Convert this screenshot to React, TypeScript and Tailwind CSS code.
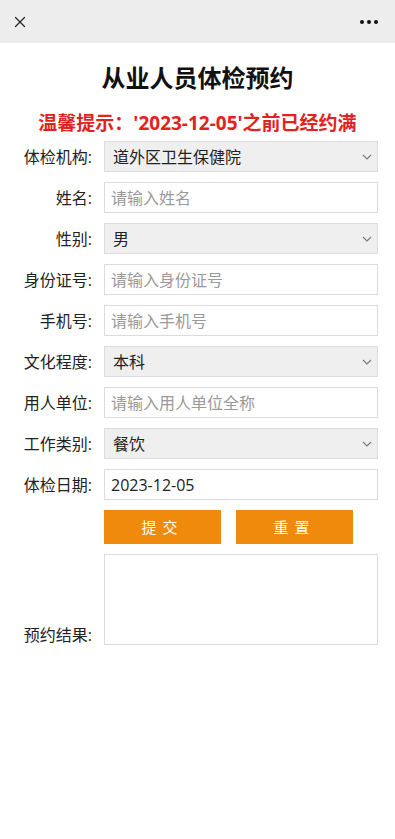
import { X } from 'lucide-react'

type Field =
  | { kind: 'select'; label: string; value: string }
  | { kind: 'input'; label: string; placeholder?: string; value?: string }

const fields: Field[] = [
  { kind: 'select', label: '体检机构', value: '道外区卫生保健院' },
  { kind: 'input', label: '姓名', placeholder: '请输入姓名' },
  { kind: 'select', label: '性别', value: '男' },
  { kind: 'input', label: '身份证号', placeholder: '请输入身份证号' },
  { kind: 'input', label: '手机号', placeholder: '请输入手机号' },
  { kind: 'select', label: '文化程度', value: '本科' },
  { kind: 'input', label: '用人单位', placeholder: '请输入用人单位全称' },
  { kind: 'select', label: '工作类别', value: '餐饮' },
  { kind: 'input', label: '体检日期', value: '2023-12-05' },
]

const Chevron = () => (
  <svg width="10" height="6" viewBox="0 0 10 6" className="shrink-0">
    <path d="M1 1l4 4 4-4" fill="none" stroke="#777" strokeWidth="1.1" />
  </svg>
)

const Label = ({ text }: { text: string }) => (
  <div className="w-[94px] shrink-0 pr-[2px] text-right text-[16px] text-[#222]">
    {text}:
  </div>
)

const App = () => {
  return (
    <div
      className="min-h-[839px] bg-white"
      style={{ fontFamily: '"Open Sans", "Noto Sans CJK SC", sans-serif' }}
    >
      {/* top bar */}
      <div className="flex h-[43px] items-center justify-between bg-[#ededed] pl-[11px] pr-[17px]">
        <X size={18} strokeWidth={1.6} className="text-[#222]" />
        <div className="flex gap-[3px]">
          <span className="h-[4px] w-[4px] rounded-full bg-[#111]" />
          <span className="h-[4px] w-[4px] rounded-full bg-[#111]" />
          <span className="h-[4px] w-[4px] rounded-full bg-[#111]" />
        </div>
      </div>

      <h1 className="pt-[18px] text-center text-[24px] font-bold leading-[34px] text-[#111]">
        从业人员体检预约
      </h1>
      <p className="mt-[15px] text-center text-[19px] font-bold leading-[26px] text-[#e0231e]">
        温馨提示：'2023-12-05'之前已经约满
      </p>

      <div className="mt-[5px] flex flex-col gap-[10px] pr-[17px]">
        {fields.map((f) => (
          <div key={f.label} className="flex items-center gap-[10px]">
            <Label text={f.label} />
            {f.kind === 'select' ? (
              <div className="flex h-[31px] flex-1 items-center justify-between border border-[#dcdcdc] bg-[#efefef] pl-[8px] pr-[5px] text-[16px] text-[#222]">
                <span>{f.value}</span>
                <Chevron />
              </div>
            ) : (
              <div className="flex h-[31px] flex-1 items-center border border-[#dcdcdc] bg-white pl-[6px] text-[16px]">
                {f.value ? (
                  <span className="text-[#222]">{f.value}</span>
                ) : (
                  <span className="text-[#9a9a9a]">{f.placeholder}</span>
                )}
              </div>
            )}
          </div>
        ))}

        <div className="flex gap-[15px] pl-[104px]">
          <button className="h-[34px] w-[117px] bg-[#f08a0c] text-[15px] tracking-[6px] text-white">
            提交
          </button>
          <button className="h-[34px] w-[117px] bg-[#f08a0c] text-[15px] tracking-[6px] text-white">
            重置
          </button>
        </div>

        <div className="flex items-end gap-[10px]">
          <div className="w-[94px] shrink-0 pr-[2px] text-right text-[16px] leading-[20px] text-[#222]">
            预约结果:
          </div>
          <div className="h-[91px] flex-1 border border-[#dcdcdc] bg-white" />
        </div>
      </div>
    </div>
  )
}

export default App
